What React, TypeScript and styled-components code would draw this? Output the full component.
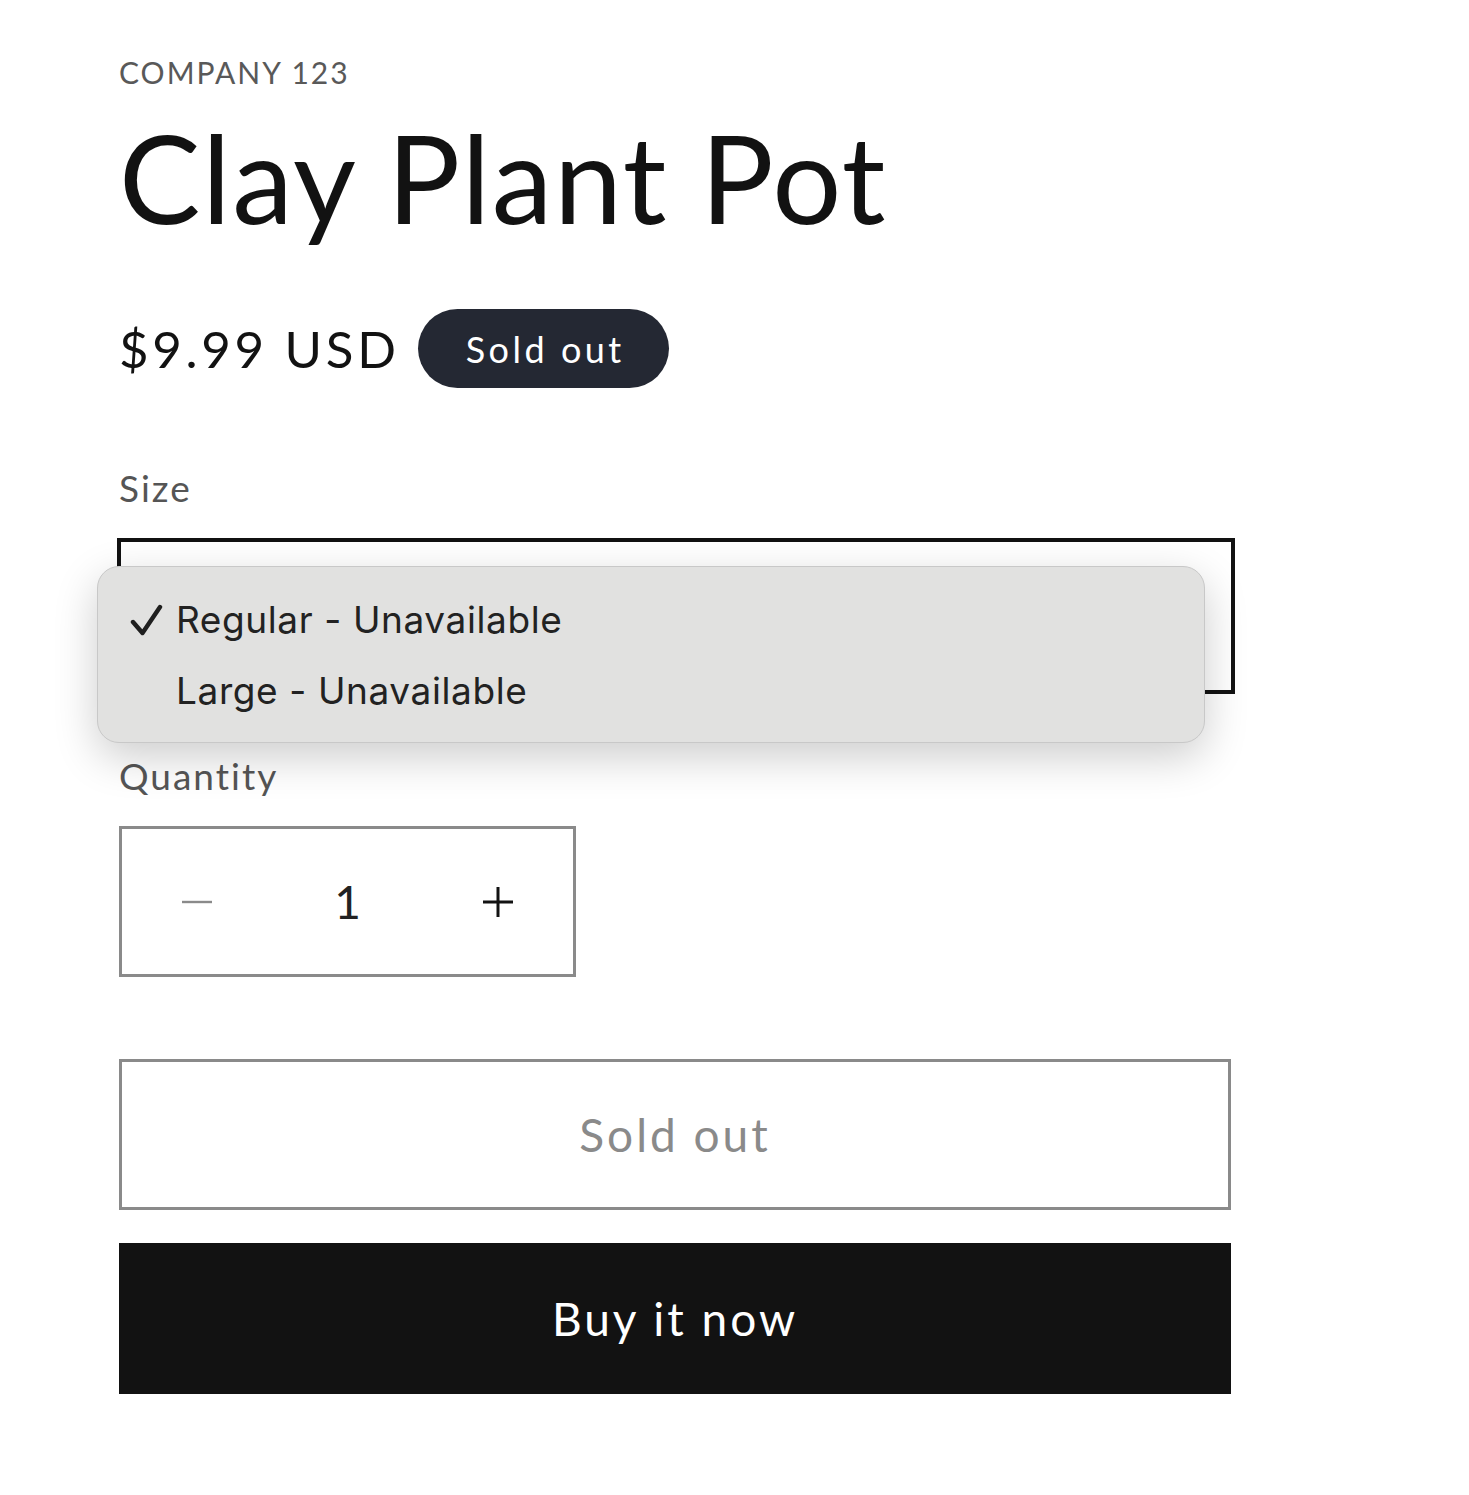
import styled, { createGlobalStyle } from "styled-components";

const GlobalStyle = createGlobalStyle`
  html, body {
    margin: 0;
    padding: 0;
    background: #ffffff;
  }
  body {
    font-family: "Lato", "Noto Sans", sans-serif;
    color: #121212;
  }
`;

export default function App() {
  return (
    <>
      <GlobalStyle />
      <Page>
        <Vendor>COMPANY 123</Vendor>
        <Title>Clay Plant Pot</Title>

        <PriceRow>
          <Price>$9.99 USD</Price>
          <Badge>Sold out</Badge>
        </PriceRow>

        <Label $top={80}>Size</Label>
        <SelectWrap>
          <SelectBox />
          <Menu>
            <MenuItem>
              <Check>
                <svg width="34" height="34" viewBox="0 0 34 34" fill="none">
                  <path
                    d="M3 19 L12.5 30 L30 4"
                    stroke="#1f1f1f"
                    strokeWidth="4.4"
                    strokeLinecap="round"
                    strokeLinejoin="round"
                  />
                </svg>
              </Check>
              Regular - Unavailable
            </MenuItem>
            <MenuItem>
              <Check />
              Large - Unavailable
            </MenuItem>
          </Menu>
        </SelectWrap>

        <Label $top={62}>Quantity</Label>
        <Quantity>
          <QtyButton>
            <svg width="32" height="32" viewBox="0 0 32 32">
              <path d="M1 16 H31" stroke="#8a8a8a" strokeWidth="2.4" />
            </svg>
          </QtyButton>
          <QtyValue>1</QtyValue>
          <QtyButton>
            <svg width="32" height="32" viewBox="0 0 32 32">
              <path
                d="M1 16 H31 M16 1 V31"
                stroke="#121212"
                strokeWidth="3"
              />
            </svg>
          </QtyButton>
        </Quantity>

        <Buttons>
          <OutlineButton>Sold out</OutlineButton>
          <SolidButton>Buy it now</SolidButton>
        </Buttons>
      </Page>
    </>
  );
}

const Page = styled.div`
  width: 1112px;
  padding: 52px 0 100px 119px;
  display: flex;
  flex-direction: column;
`;

const Vendor = styled.div`
  font-size: 30px;
  letter-spacing: 2px;
  color: #595959;
  line-height: 40px;
`;

const Title = styled.h1`
  margin: 18px 0 0;
  font-size: 122px;
  font-weight: 400;
  letter-spacing: 1.5px;
  line-height: 1.1;
  color: #121212;
`;

const PriceRow = styled.div`
  display: flex;
  align-items: center;
  gap: 18px;
  margin-top: 65px;
`;

const Price = styled.div`
  font-size: 51px;
  letter-spacing: 3.7px;
  color: #121212;
`;

const Badge = styled.div`
  background: #242833;
  color: #ffffff;
  border-radius: 40px;
  height: 79px;
  padding: 0 44px 0 48px;
  display: flex;
  align-items: center;
  font-size: 36px;
  letter-spacing: 3.5px;
`;

const Label = styled.div<{ $top: number }>`
  font-size: 37px;
  color: #555555;
  letter-spacing: 2px;
  margin-top: ${(p) => p.$top}px;
  line-height: 40px;
`;

const SelectWrap = styled.div`
  position: relative;
  margin-top: 30px;
`;

const SelectBox = styled.div`
  height: 156px;
  width: 1118px;
  margin-left: -2px;
  border: 4px solid #121212;
  box-sizing: border-box;
`;

const Menu = styled.div`
  position: absolute;
  left: -22px;
  top: 28px;
  width: 1108px;
  height: 177px;
  box-sizing: border-box;
  background: #e1e1e0;
  border: 1px solid #c8c8c8;
  border-radius: 22px;
  box-shadow: 0 14px 44px rgba(0, 0, 0, 0.2);
  padding: 17px 0 0 32px;
  font-family: "Inter", "Noto Sans", sans-serif;
  font-size: 37px;
  letter-spacing: 0.6px;
  color: #222222;
`;

const MenuItem = styled.div`
  display: flex;
  align-items: center;
  height: 71px;
`;

const Check = styled.span`
  width: 46px;
  display: flex;
  align-items: center;
`;

const Quantity = styled.div`
  margin-top: 30px;
  width: 457px;
  height: 151px;
  box-sizing: border-box;
  border: 3px solid #8a8a8a;
  display: grid;
  grid-template-columns: 1fr 1fr 1fr;
  align-items: center;
`;

const QtyButton = styled.div`
  display: flex;
  justify-content: center;
  align-items: center;
`;

const QtyValue = styled.div`
  text-align: center;
  font-size: 46px;
  color: #222;
`;

const Buttons = styled.div`
  margin-top: 82px;
  display: flex;
  flex-direction: column;
  gap: 33px;
`;

const OutlineButton = styled.div`
  height: 151px;
  box-sizing: border-box;
  border: 3px solid #8a8a8a;
  display: flex;
  align-items: center;
  justify-content: center;
  font-size: 46px;
  letter-spacing: 3px;
  color: #8a8a8a;
`;

const SolidButton = styled.div`
  height: 151px;
  background: #121212;
  display: flex;
  align-items: center;
  justify-content: center;
  font-size: 46px;
  letter-spacing: 3px;
  color: #ffffff;
`;
